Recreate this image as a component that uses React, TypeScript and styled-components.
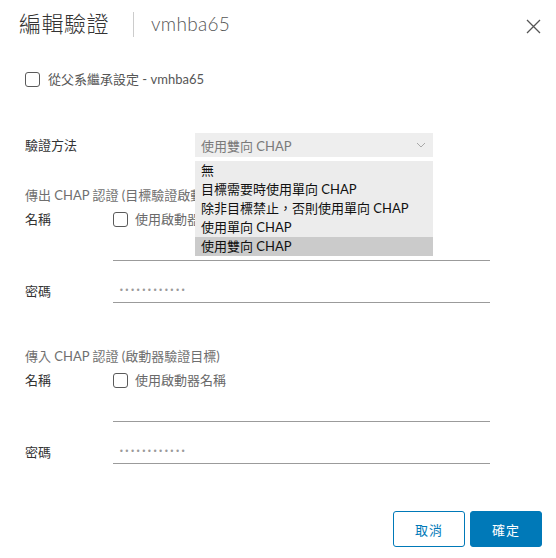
import React from "react";
import styled, { createGlobalStyle } from "styled-components";

const GlobalStyle = createGlobalStyle`
  html, body {
    margin: 0;
    padding: 0;
    background: #ffffff;
  }
  body {
    font-family: Lato, "Noto Sans CJK TC", sans-serif;
    -webkit-font-smoothing: antialiased;
  }
  * {
    box-sizing: border-box;
  }
`;

const METHODS = [
  "無",
  "目標需要時使用單向 CHAP",
  "除非目標禁止，否則使用單向 CHAP",
  "使用單向 CHAP",
  "使用雙向 CHAP",
];

const ChevronDown = () => (
  <svg width="10" height="6" viewBox="0 0 10 6" fill="none">
    <path d="M1 1l4 4 4-4" stroke="#a8a8a8" strokeWidth="1" />
  </svg>
);

const CloseIcon = () => (
  <svg width="15" height="15" viewBox="0 0 15 15" fill="none">
    <path d="M1 1l13 13M14 1L1 14" stroke="#555" strokeWidth="1.3" />
  </svg>
);

const Section = ({ title }: { title: string }) => (
  <>
    <SectionTitle>{title}</SectionTitle>
    <FieldGrid>
      <RowLabel $height={16}>名稱</RowLabel>
      <FieldStack>
        <CheckRow>
          <CheckBox />
          <CheckText>使用啟動器名稱</CheckText>
        </CheckRow>
        <LineInput $top={10} />
      </FieldStack>
    </FieldGrid>
    <FieldGrid $top={18}>
      <RowLabel $height={24}>密碼</RowLabel>
      <LineInput>
        <Dots>••••••••••••</Dots>
      </LineInput>
    </FieldGrid>
  </>
);

const App = () => {
  return (
    <Dialog>
      <GlobalStyle />
      <Header>
        <Title>編輯驗證</Title>
        <TitleDivider />
        <SubTitle>vmhba65</SubTitle>
        <CloseButton>
          <CloseIcon />
        </CloseButton>
      </Header>

      <Body>
        <InheritRow>
          <CheckBox />
          <InheritText>從父系繼承設定 - vmhba65</InheritText>
        </InheritRow>

        <MethodRow>
          <RowLabel $height={24}>驗證方法</RowLabel>
          <SelectWrap>
            <SelectBox>
              <span>使用雙向 CHAP</span>
              <ChevronDown />
            </SelectBox>
            <OptionList>
              {METHODS.map((m, i) => (
                <OptionItem key={m} $selected={i === METHODS.length - 1}>
                  {m}
                </OptionItem>
              ))}
            </OptionList>
          </SelectWrap>
        </MethodRow>

        <OutGroup>
          <Section title="傳出 CHAP 認證 (目標驗證啟動器)" />
        </OutGroup>
        <InGroup>
          <Section title="傳入 CHAP 認證 (啟動器驗證目標)" />
        </InGroup>
      </Body>

      <Footer>
        <Button $primary={false}>取消</Button>
        <Button $primary>確定</Button>
      </Footer>
    </Dialog>
  );
};

export default App;

const Dialog = styled.div`
  width: 556px;
  height: 558px;
  background: #ffffff;
  display: flex;
  flex-direction: column;
`;

const Header = styled.div`
  display: flex;
  align-items: center;
  height: 24px;
  margin: 12px 15px 0 19px;
`;

const Title = styled.h3`
  margin: 0;
  font-size: 22px;
  font-weight: 200;
  line-height: 24px;
  color: #333333;
  letter-spacing: 0.5px;
`;

const TitleDivider = styled.div`
  width: 1px;
  height: 25px;
  background: #cccccc;
  margin: 0 17px 0 24px;
`;

const SubTitle = styled.span`
  font-size: 19px;
  font-weight: 300;
  line-height: 24px;
  color: #565656;
  letter-spacing: 0.3px;
`;

const CloseButton = styled.button`
  margin-left: auto;
  border: none;
  background: none;
  padding: 0;
  display: flex;
  margin-top: 4px;
  cursor: pointer;
`;

const Body = styled.div`
  padding: 0 0 0 25px;
  flex: 1;
`;

const InheritRow = styled.div`
  display: flex;
  align-items: center;
  gap: 8px;
  margin-top: 36px;
  height: 15px;
`;

const CheckBox = styled.span`
  display: inline-block;
  width: 15px;
  height: 15px;
  border: 1px solid #5a5a5a;
  border-radius: 3px;
  flex-shrink: 0;
`;

const InheritText = styled.span`
  font-size: 13px;
  line-height: 15px;
  color: #565656;
`;

const MethodRow = styled.div`
  display: grid;
  grid-template-columns: 170px 238px;
  margin-top: 46px;
`;

const RowLabel = styled.div<{ $height: number }>`
  font-size: 13px;
  line-height: ${(p) => p.$height}px;
  color: #333333;
`;

const SelectWrap = styled.div`
  position: relative;
`;

const SelectBox = styled.div`
  height: 24px;
  background: #eeeeee;
  display: flex;
  align-items: center;
  justify-content: space-between;
  padding: 0 7px 0 6px;
  font-size: 13px;
  color: #7a7a7a;
`;

const OptionList = styled.div`
  position: absolute;
  top: 28px;
  left: 0;
  right: 0;
  background: #ececec;
  z-index: 5;
`;

const OptionItem = styled.div<{ $selected: boolean }>`
  height: 19px;
  line-height: 19px;
  padding-left: 6px;
  font-size: 13px;
  color: #111111;
  background: ${(p) => (p.$selected ? "#cbcbcb" : "transparent")};
`;

const OutGroup = styled.div`
  margin-top: 29px;
`;

const InGroup = styled.div`
  margin-top: 44px;
`;

const SectionTitle = styled.div`
  font-size: 13px;
  line-height: 18px;
  color: #6f6f6f;
  margin-bottom: 7px;
  white-space: nowrap;
`;

const FieldGrid = styled.div<{ $top?: number }>`
  display: grid;
  grid-template-columns: 88px 377px;
  margin-top: ${(p) => p.$top ?? 0}px;
`;

const FieldStack = styled.div`
  display: flex;
  flex-direction: column;
`;

const CheckRow = styled.div`
  display: flex;
  align-items: center;
  gap: 7px;
  height: 16px;
`;

const CheckText = styled.span`
  font-size: 13px;
  color: #6a6a6a;
  line-height: 16px;
`;

const LineInput = styled.div<{ $top?: number }>`
  height: 24px;
  margin-top: ${(p) => p.$top ?? 0}px;
  border-bottom: 1px solid #9b9b9b;
  display: flex;
  align-items: center;
  padding-left: 6px;
`;

const Dots = styled.span`
  font-size: 8px;
  letter-spacing: 0.9px;
  color: #9a9a9a;
  font-family: "DejaVu Sans", sans-serif;
`;

const Footer = styled.div`
  display: flex;
  justify-content: flex-end;
  gap: 5px;
  padding: 0 14px 11px 0;
`;

const Button = styled.button<{ $primary: boolean }>`
  width: 72px;
  height: 36px;
  border-radius: 3px;
  border: 1px solid #0079b8;
  background: ${(p) => (p.$primary ? "#0079b8" : "#ffffff")};
  color: ${(p) => (p.$primary ? "#ffffff" : "#0079b8")};
  font-family: Lato, "Noto Sans CJK TC", sans-serif;
  font-size: 13px;
  letter-spacing: 1px;
  padding: 0;
  cursor: pointer;
`;
